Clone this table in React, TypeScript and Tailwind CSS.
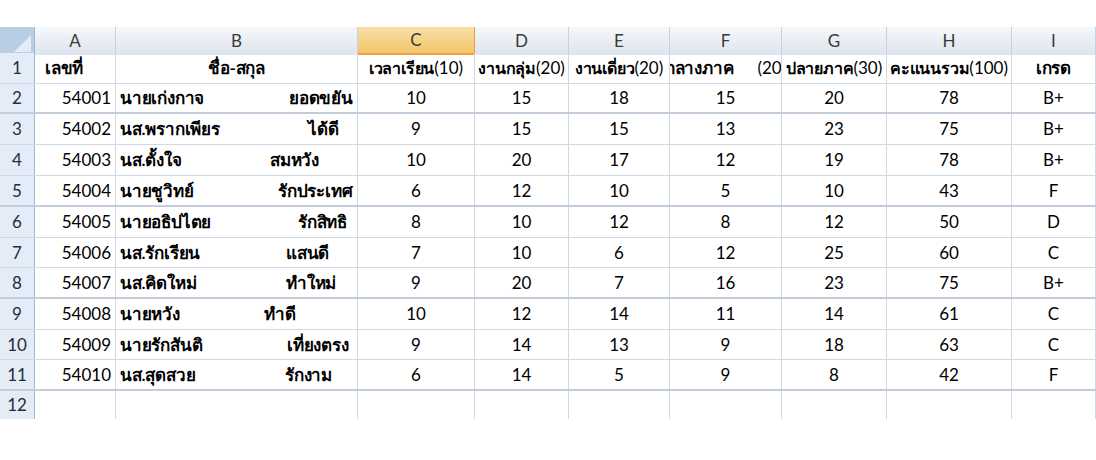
import React from 'react';

const cols = ['A', 'B', 'C', 'D', 'E', 'F', 'G', 'H', 'I'];

// last names start at a different x in every row, as typed in the sheet
const students = [
  { id: '54001', first: 'นายเก่งกาจ', last: 'ยอดขยัน', gap: 'w-[169px]', s: ['10', '15', '18', '15', '20', '78', 'B+'] },
  { id: '54002', first: 'นส.พรากเพียร', last: 'ได้ดี', gap: 'w-[188px]', s: ['9', '15', '15', '13', '23', '75', 'B+'] },
  { id: '54003', first: 'นส.ตั้งใจ', last: 'สมหวัง', gap: 'w-[150px]', s: ['10', '20', '17', '12', '19', '78', 'B+'] },
  { id: '54004', first: 'นายชูวิทย์', last: 'รักประเทศ', gap: 'w-[158px]', s: ['6', '12', '10', '5', '10', '43', 'F'] },
  { id: '54005', first: 'นายอธิปไตย', last: 'รักสิทธิ', gap: 'w-[178px]', s: ['8', '10', '12', '8', '12', '50', 'D'] },
  { id: '54006', first: 'นส.รักเรียน', last: 'แสนดี', gap: 'w-[166px]', s: ['7', '10', '6', '12', '25', '60', 'C'] },
  { id: '54007', first: 'นส.คิดใหม่', last: 'ทำใหม่', gap: 'w-[166px]', s: ['9', '20', '7', '16', '23', '75', 'B+'] },
  { id: '54008', first: 'นายหวัง', last: 'ทำดี', gap: 'w-[144px]', s: ['10', '12', '14', '11', '14', '61', 'C'] },
  { id: '54009', first: 'นายรักสันติ', last: 'เที่ยงตรง', gap: 'w-[167px]', s: ['9', '14', '13', '9', '18', '63', 'C'] },
  { id: '54010', first: 'นส.สุดสวย', last: 'รักงาม', gap: 'w-[165px]', s: ['6', '14', '5', '9', '8', '42', 'F'] },
];

const rowH = ['h-[30px]', 'h-[31px]', 'h-[31px]', 'h-[31px]', 'h-[31px]', 'h-[30px]', 'h-[31px]', 'h-[31px]', 'h-[30px]', 'h-[31px]'];

const grid = 'grid grid-cols-[35px_81px_242px_117px_94px_101px_112px_105px_125px_84px]';
const cell = 'border-r border-[#d0d7e5] overflow-hidden whitespace-nowrap flex items-center';
const rowHead = 'bg-[#e4ecf7] border-r border-[#9eb6ce] flex items-center justify-center text-[#1f2d3d]';
const thai = 'font-semibold tracking-[-0.2px]';
const thaiHead = 'font-semibold text-[16px] tracking-[-0.2px]';

export default function App() {
  return (
    <div className="w-[1096px] h-[460px] bg-white pt-[27px] overflow-hidden text-[17px] text-black font-['Lato','Noto_Sans',sans-serif]">
      {/* column letters */}
      <div className={`${grid} h-[26px] border-b border-[#9eb6ce]`}>
        <div className="bg-[#b9cde5] border-r border-[#9eb6ce] flex items-end justify-end p-[3px]">
          <div className="w-0 h-0 border-l-[17px] border-l-transparent border-b-[17px] border-b-[#e3ebf5]" />
        </div>
        {cols.map(c => (
          <div
            key={c}
            className={
              c === 'C'
                ? 'bg-gradient-to-b from-[#f9e0a8] to-[#f2c568] border-r border-b-2 border-[#f29b3f] flex items-center justify-center text-[#3a3a3a]'
                : 'bg-gradient-to-b from-[#f6f8fb] to-[#dde4ee] border-r border-[#c5d2e0] flex items-center justify-center text-[#3a3a3a]'
            }
          >
            {c}
          </div>
        ))}
      </div>

      {/* row 1 : headings */}
      <div className={`${grid} h-[31px] border-b border-[#d0d7e5]`}>
        <div className={rowHead}>1</div>
        <div className={`${cell} pl-[10px]`}><span className={thai}>เลขที่</span></div>
        <div className={`${cell} justify-center`}><span className={thai}>ชื่อ-สกุล</span></div>
        <div className={`${cell} justify-center`}><span className={thaiHead}>เวลาเรียน</span>(10)</div>
        <div className={`${cell} justify-center`}><span className={thaiHead}>งานกลุ่ม</span>(20)</div>
        <div className={`${cell} justify-center`}><span className={thaiHead}>งานเดี่ยว</span>(20)</div>
        <div className={`${cell} justify-center`}>
          <span className={`${thai} shrink-0`}>กลางภาค</span>
          <span className="ml-[24px] shrink-0">(20)</span>
        </div>
        <div className={`${cell} justify-center`}><span className={thaiHead}>ปลายภาค</span>(30)</div>
        <div className={`${cell} justify-center`}><span className={thaiHead}>คะแนนรวม</span>(100)</div>
        <div className={`${cell} justify-center`}><span className={thai}>เกรด</span></div>
      </div>

      {students.map((st, i) => {
        const thick = i === 0 || i === 3 || i === 6 || i === 9;
        return (
          <div key={st.id} className={`${grid} ${rowH[i]} ${thick ? 'border-b-2 border-[#c3ccda]' : 'border-b border-[#d0d7e5]'}`}>
            <div className={rowHead}>{i + 2}</div>
            <div className={`${cell} justify-end pr-[4px]`}>{st.id}</div>
            <div className={`${cell} pl-[4px]`}>
              <span className={`${st.gap} ${thai} shrink-0`}>{st.first}</span>
              <span className={`${thai} shrink-0`}>{st.last}</span>
            </div>
            {st.s.map((v, j) => (
              <div key={j} className={`${cell} justify-center`}>{v}</div>
            ))}
          </div>
        );
      })}

      {/* row 12 : empty */}
      <div className={`${grid} h-[28px]`}>
        <div className={rowHead}>12</div>
        {cols.map(c => (
          <div key={c} className={cell} />
        ))}
      </div>
    </div>
  );
}
